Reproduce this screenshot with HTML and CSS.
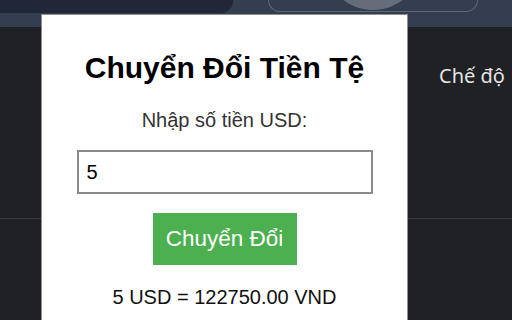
FILE: index.html
```html
<!DOCTYPE html>
<html lang="vi">
<head>
<meta charset="utf-8">
<link rel="stylesheet" href="styles.css">
</head>
<body>
<div class="toolbar">
  <div class="tab-dark"></div>
  <div class="omnibox"><div class="omni-circle"></div></div>
</div>
<div class="settings">
  <span class="setting-label">Chế độ</span>
</div>
<div class="popup">
  <h1 class="title">Chuyển Đổi Tiền Tệ</h1>
  <label class="label" for="usd">Nhập số tiền USD:</label>
  <input class="amount" id="usd" type="text" value="5">
  <button class="convert">Chuyển Đổi</button>
  <p class="result">5 USD = 122750.00 VND</p>
</div>
</body>
</html>
```
FILE: styles.css
```css
html, body {
  margin: 0;
  padding: 0;
}
body {
  width: 512px;
  height: 320px;
  overflow: hidden;
  background: #202124;
  position: relative;
  font-family: "Liberation Sans", Arial, sans-serif;
}
.toolbar {
  height: 27px;
  background: #343e50;
  display: flex;
  align-items: flex-start;
}
.tab-dark {
  width: 233px;
  height: 13px;
  background: #1f2739;
  border-bottom-right-radius: 12px;
  flex-shrink: 0;
}
.omnibox {
  margin-left: 35px;
  width: 210px;
  height: 12px;
  box-sizing: border-box;
  border: 1px solid #5f6778;
  border-top: none;
  border-radius: 0 0 20px 20px;
  overflow: hidden;
  display: flex;
  justify-content: center;
  flex-shrink: 0;
}
.omni-circle {
  width: 98px;
  height: 98px;
  margin-top: -88px;
  border-radius: 50%;
  background: #666d7a;
  flex-shrink: 0;
}
.settings {
  height: 192px;
  border-bottom: 1px solid #3b3c3f;
  padding: 37px 0 0 439px;
  box-sizing: border-box;
  white-space: nowrap;
}
.setting-label {
  font-family: "Noto Sans", "DejaVu Sans", sans-serif;
  font-size: 20px;
  line-height: 24px;
  color: #e3e3e3;
}
.popup {
  position: absolute;
  left: 41px;
  top: 14px;
  width: 367px;
  bottom: -10px;
  box-sizing: border-box;
  background: #fff;
  border: 1px solid #8e8e8e;
  display: flex;
  flex-direction: column;
  align-items: center;
  padding-top: 36px;
}
.title {
  margin: 0;
  font-size: 30px;
  line-height: 34px;
  font-weight: bold;
  color: #000;
}
.label {
  margin-top: 23px;
  font-size: 20px;
  line-height: 24px;
  color: #333;
}
.amount {
  margin-top: 18px;
  width: 296px;
  height: 44px;
  box-sizing: border-box;
  border: 2px solid #8a8a8a;
  padding: 0 8px;
  font-family: "Liberation Sans", Arial, sans-serif;
  font-size: 20px;
  color: #000;
  background: #fff;
  outline: none;
}
.convert {
  margin-top: 19px;
  width: 144px;
  height: 52px;
  border: none;
  background: #4caf50;
  color: #fff;
  font-family: "Liberation Sans", Arial, sans-serif;
  font-size: 22.5px;
  padding: 0;
}
.result {
  margin: 20px 0 0;
  font-size: 20px;
  line-height: 24px;
  color: #111;
}
```
